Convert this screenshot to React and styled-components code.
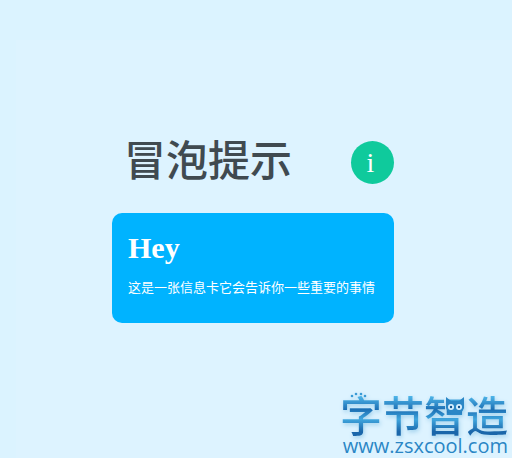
import React from "react";
import styled, { createGlobalStyle } from "styled-components";

const GlobalStyle = createGlobalStyle`
  * { box-sizing: border-box; }
  body { margin: 0; background: #dbf3ff; }
`;

const Page = styled.div`
  display: flex;
  min-height: 100vh;
  padding: 40px 0 0 16px;
  background: #dbf3ff;
  font-family: "Liberation Serif", "Noto Sans CJK SC", serif;
`;

const Stage = styled.main`
  display: flex;
  flex: 1;
  flex-direction: column;
  justify-content: space-between;
  background: #ddf3ff;
`;

const Widget = styled.section`
  align-self: flex-start;
  min-width: 282px;
  margin: 98px 0 0 96px;
`;

const Header = styled.header`
  display: flex;
  align-items: center;
  justify-content: space-between;
  height: 48px;
  padding-left: 12px;
`;

const Title = styled.h1`
  margin: 0;
  color: #404a50;
  font-size: 42px;
  font-weight: 500;
  line-height: 48px;
  white-space: nowrap;
`;

const InfoButton = styled.button`
  width: 43px;
  height: 43px;
  padding: 0 4px 0 0;
  border: 0;
  border-radius: 50%;
  background: #0fca9c;
  color: #fff;
  font-family: "Liberation Serif", serif;
  font-size: 28px;
  line-height: 43px;
  cursor: pointer;
`;

const Card = styled.div`
  margin-top: 27px;
  padding: 16px 16px 26px;
  border-radius: 10px;
  background: #00b3ff;
  color: #fff;
`;

const CardTitle = styled.h2`
  margin: 0;
  font-size: 30px;
  font-weight: 700;
  line-height: 38px;
`;

const CardText = styled.p`
  margin: 10px 0 0;
  font-family: "Noto Sans CJK SC", sans-serif;
  font-size: 13px;
  font-weight: 400;
  line-height: 20px;
  white-space: nowrap;
`;

const Brand = styled.footer`
  display: flex;
  flex-direction: column;
  align-items: flex-end;
  padding: 0 4px 2px 0;
`;

const BrandName = styled.div`
  position: relative;
  background: linear-gradient(#4db4e8 10%, #1c6fb4 40%, #3fa6de 62%, #1a66aa 90%);
  background-clip: text;
  color: transparent;
  font-family: "Noto Sans CJK SC", sans-serif;
  font-size: 42px;
  font-weight: 500;
  line-height: 44px;
  filter: drop-shadow(1px 2px 2px #9fd0ec);
`;

const BrandArt = styled.svg`
  position: absolute;
  inset: 0;
  width: 100%;
  height: 100%;
`;

const BrandLink = styled.a`
  color: #2a86c5;
  font-family: "Open Sans", sans-serif;
  font-size: 20px;
  font-weight: 500;
  line-height: 20px;
  text-decoration: none;
`;

export default function App() {
  return (
    <>
      <GlobalStyle />
      <Page>
        <Stage>
          <Widget>
            <Header>
              <Title>冒泡提示</Title>
              <InfoButton type="button" aria-describedby="info-card">i</InfoButton>
            </Header>
            <Card id="info-card" role="tooltip">
              <CardTitle>Hey</CardTitle>
              <CardText>这是一张信息卡它会告诉你一些重要的事情</CardText>
            </Card>
          </Widget>
          <Brand>
            <BrandName>
              字节智造
              <BrandArt viewBox="0 0 168 44" aria-hidden="true">
                <g fill="#3a9bd6">
                  <circle cx="12" cy="4" r="1.3" />
                  <circle cx="16" cy="2" r="1.3" />
                  <circle cx="21" cy="2" r="1.3" />
                  <circle cx="25" cy="4" r="1.3" />
                </g>
                <path d="M106 5l5 4h8l5-4v11q-2 6-9 6t-9-6z" fill="#2b87c6" />
                <circle cx="111" cy="15" r="3" fill="#d7f0ff" />
                <circle cx="119" cy="15" r="3" fill="#d7f0ff" />
                <circle cx="111" cy="15" r="1.2" fill="#145590" />
                <circle cx="119" cy="15" r="1.2" fill="#145590" />
              </BrandArt>
            </BrandName>
            <BrandLink href="http://www.zsxcool.com">www.zsxcool.com</BrandLink>
          </Brand>
        </Stage>
      </Page>
    </>
  );
}
